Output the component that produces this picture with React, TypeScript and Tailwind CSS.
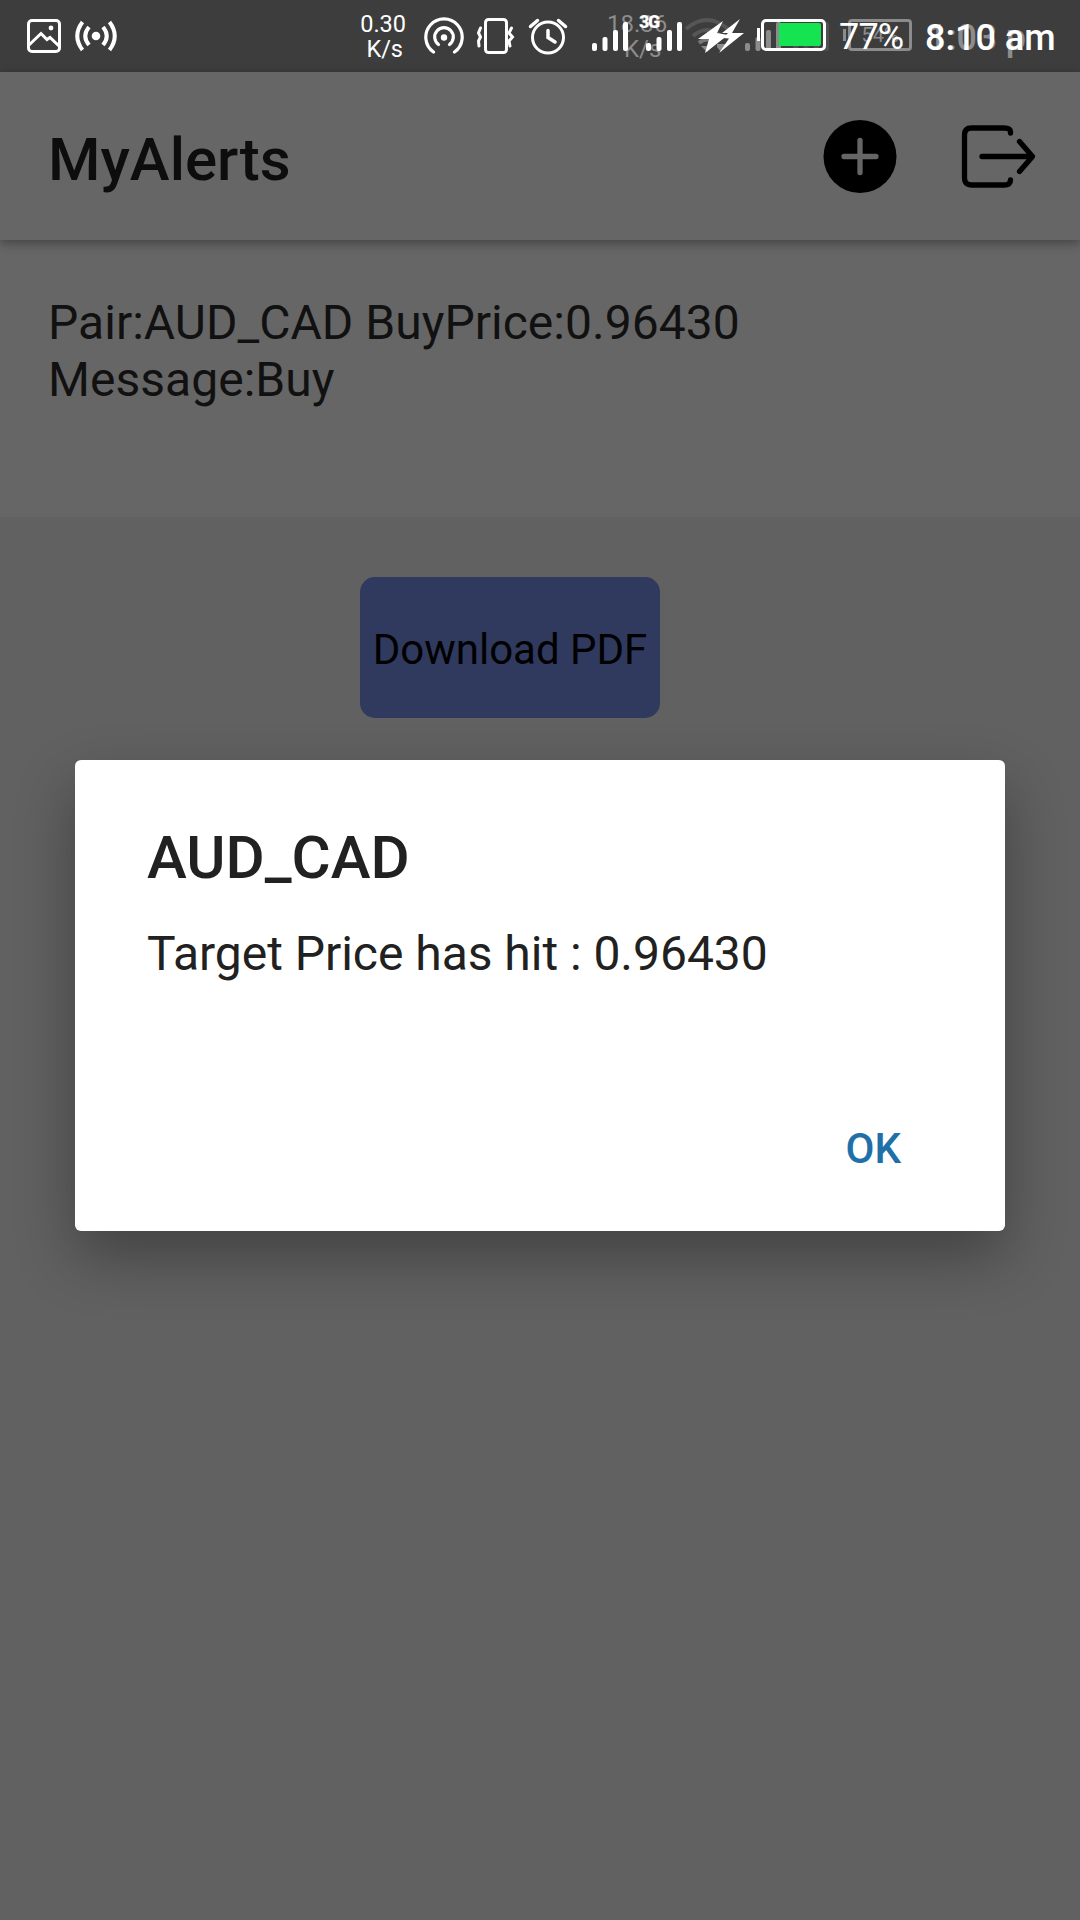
import React from "react";

function SignalBars({ className, fill = "#fff" }: { className?: string; fill?: string }) {
  return (
    <svg className={className} width="36" height="30" viewBox="0 0 36 30" fill={fill}>
      <rect x="0" y="21" width="5" height="8" rx="2" />
      <rect x="10.5" y="15" width="5" height="14" rx="2" />
      <rect x="21" y="8" width="5" height="21" rx="2" />
      <rect x="31" y="0" width="5" height="29" rx="2" />
    </svg>
  );
}

function FadedIndicators() {
  return (
    <div className="absolute inset-0 text-[#8c8c8c]">
      <div className="absolute left-[607px] top-[12px] text-[24px] leading-[25px]">
        18.36
        <br />
        <span className="pl-[17px]">K/s</span>
      </div>
      <svg className="absolute left-[684px] top-[16px]" width="52" height="38" viewBox="0 0 52 38" fill="none">
        <path d="M2 13Q23 -5 44 13" stroke="#565656" strokeWidth="4" />
        <path d="M9 20Q23 8 37 20" stroke="#565656" strokeWidth="4" />
        <path d="M15 27Q23 20 31 27" stroke="#777" strokeWidth="4" />
        <path d="M17 30h12l-6 6z M33 28h8v3h-8z M33 31h8l-4 5z" fill="#8c8c8c" />
      </svg>
      <SignalBars className="absolute left-[745px] top-[22px]" fill="#8c8c8c" />
      <SignalBars className="absolute left-[793px] top-[22px]" fill="#505050" />
      <div className="absolute left-[848px] top-[19px] flex h-8 w-[64px] items-center justify-center rounded-[4px] border-[3px] border-[#8c8c8c] text-[20px] leading-none">
        54%
      </div>
      <div className="absolute left-[843px] top-[29px] h-3 w-[3px] bg-[#8c8c8c]" />
      <div className="absolute left-[927px] top-[17px] whitespace-nowrap text-[36px] font-medium leading-[42px] tracking-[-0.200px]">
        1:03 p
      </div>
    </div>
  );
}

function StatusBar() {
  return (
    <div className="relative h-[72px] bg-[#3d3d3d] text-white">
      <FadedIndicators />
      <div className="relative flex h-full items-center">
        <svg className="ml-[27px] shrink-0" width="34" height="34" viewBox="0 0 34 34" fill="none" stroke="#fff" strokeWidth="3">
          <rect x="1.5" y="1.5" width="31" height="31" rx="3.5" />
          <path d="M2 26L14 14.5L20 20.5L23 18.5L32 27" />
          <circle cx="24" cy="9" r="2.4" fill="#fff" stroke="none" />
        </svg>
        <svg className="ml-[14px] shrink-0" width="42" height="34" viewBox="0 0 42 34" fill="none" stroke="#fff" strokeWidth="4">
          <circle cx="21" cy="17" r="4.3" fill="#fff" stroke="none" />
          <path d="M7.5 3Q-3 17 7.5 31M34.500 3Q45 17 34.500 31M14 8Q6.500 17 14 26M28 8Q35.500 17 28 26" />
        </svg>
        <div className="ml-[243px] mt-[1px] w-[46px] shrink-0 text-right text-[23.500px] leading-[25px]">
          0.30
          <br />
          <span className="pr-[3px]">K/s</span>
        </div>
        <svg className="ml-[18px] shrink-0" width="40" height="38" viewBox="0 0 40 38" fill="none" stroke="#fff" strokeWidth="3.200" strokeLinecap="round">
          <path d="M9.500 35A18.200 18.200 0 1 1 30.500 35" />
          <path d="M14.500 27.500A9.300 9.300 0 1 1 25.500 27.500" />
          <circle cx="20" cy="20.500" r="3.200" fill="#fff" stroke="none" />
        </svg>
        <svg className="ml-[12px] shrink-0" width="40" height="38" viewBox="0 0 40 38" fill="none" stroke="#fff" strokeWidth="3">
          <rect x="9.500" y="2.500" width="21" height="33" rx="3" />
          <path strokeLinecap="round" d="M4.500 11L2.500 16L4.500 20L2.500 24L3 29M35.500 11L33 16L36.500 20L33 24L34 29" />
        </svg>
        <svg className="ml-[12px] shrink-0" width="40" height="38" viewBox="0 0 40 38" fill="none" stroke="#fff" strokeWidth="3" strokeLinecap="round">
          <circle cx="20" cy="20.500" r="15.500" />
          <path d="M20 13.500V20.500L27 25" strokeWidth="3.500" />
          <path d="M2.500 9.500L9.500 3.500M30.500 3.500L37.500 9.500" strokeWidth="3.500" />
        </svg>
        <SignalBars className="ml-[24px] mt-[2px] shrink-0" />
        <div className="relative ml-[18px] mt-[2px] h-[30px] w-9 shrink-0">
          <SignalBars />
          <span className="absolute -left-[7px] -top-[9px] text-[18px] font-black leading-[18px] tracking-[-1.500px]">3G</span>
        </div>
        <svg className="ml-[16px] shrink-0" width="46" height="34" viewBox="0 0 46 34" fill="#fff">
          <path d="M25 2L0 20H11L7 34L30 16L19 14Z" />
          <path d="M42 0L24 14H30L25 19L31 19.500L21 34L46 14H34Z" />
        </svg>
        <div className="ml-[13px] mt-[-4px] h-[13px] w-[3px] shrink-0 bg-white" />
        <div className="ml-px mt-[-2px] flex h-8 w-[65px] shrink-0 justify-end rounded-[5px] border-[3px] border-white p-[2px] pt-[1px]">
          <div className="h-[23px] w-[44px] rounded-[2px] border-l-2 border-[#8c8c8c] bg-[#14e352]" />
        </div>
        <div className="ml-[13px] mt-px w-[66px] shrink-0 text-[36px] leading-10 tracking-[-0.800px]">77%</div>
        <div className="ml-[20px] mt-[4px] shrink-0 whitespace-nowrap text-[36px] font-medium leading-[42px]">8:10 am</div>
      </div>
    </div>
  );
}

function Header() {
  return (
    <header className="relative flex h-[168px] items-center bg-[#666] pl-12 pr-[36px] shadow-[0_3px_10px_rgba(0,0,0,0.35)]">
      <h1 className="mt-[7px] grow text-[60px] font-medium leading-[70px] text-[#0d0d0d]">MyAlerts</h1>
      <button aria-label="Add alert">
        <svg width="90" height="90" viewBox="0 0 90 90">
          <circle cx="45" cy="45.500" r="36.500" fill="#000" />
          <path d="M45 29.500V61.500M29 45.500H61" stroke="#666" strokeWidth="5.300" strokeLinecap="round" />
        </svg>
      </button>
      <button aria-label="Log out" className="ml-[49px]">
        <svg width="90" height="90" viewBox="0 0 90 90" fill="none" stroke="#000" strokeWidth="5.300" strokeLinecap="round" strokeLinejoin="round">
          <path d="M56.500 22V21Q56.500 17 50 17H17.500Q10.500 17 10.500 24V67Q10.500 74 17.500 74H50Q56.500 74 56.500 69" />
          <path d="M28 45.500H78M65.500 30.500L78.500 45.500L65.500 60.500" />
        </svg>
      </button>
    </header>
  );
}

function AlertDialog() {
  return (
    <div className="absolute inset-x-0 bottom-[2px] top-[72px] flex items-center justify-center">
      <div className="flex h-[471px] w-[930px] flex-col rounded-[6px] bg-white px-[72px] pt-[63px] text-[#212121] shadow-[0_26px_60px_rgba(0,0,0,0.32)]">
        <h2 className="text-[60px] font-medium leading-[70px]">AUD_CAD</h2>
        <p className="mt-[33px] text-[48px] leading-[56px] tracking-[-0.030px]">Target Price has hit : 0.96430</p>
        <button className="ml-auto mr-[32px] mt-[142px] text-[42px] font-medium leading-[50px] text-[#1f6fa8]">OK</button>
      </div>
    </div>
  );
}

export default function App() {
  return (
    <div className="relative flex h-[1920px] w-[1080px] flex-col overflow-hidden bg-[#616161] font-['Roboto',sans-serif]">
      <StatusBar />
      <Header />
      <section className="h-[277px] bg-[#666] px-12 pt-[54px] text-[48px] leading-[57px] tracking-[0.030px] text-[#111]">
        <p>Pair:AUD_CAD BuyPrice:0.96430</p>
        <p>Message:Buy</p>
      </section>
      <button className="ml-[360px] mt-[60px] h-[141px] w-[300px] rounded-[15px] bg-[#30395e] pt-1 text-[42px] leading-[49px] text-black">
        Download PDF
      </button>
      <AlertDialog />
    </div>
  );
}
